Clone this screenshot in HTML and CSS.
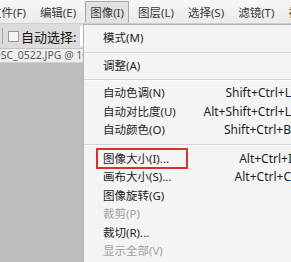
FILE: index.html
```html
<!DOCTYPE html>
<html lang="zh-CN">
<head>
    <meta charset="UTF-8">
    <title>图像菜单</title>
    <link rel="stylesheet" href="styles.css">
</head>
<body>

    <!-- Верхнее меню -->
    <div class="menubar">
        <span class="mb-item first">文件(F)</span>
        <span class="mb-item">编辑(E)</span>
        <span class="mb-item active">图像(I)</span>
        <span class="mb-item">图层(L)</span>
        <span class="mb-item">选择(S)</span>
        <span class="mb-item">滤镜(T)</span>
        <span class="mb-item">视图(V)</span>
    </div>

    <div class="workspace">
        <div class="options">
            <span class="grip"></span>
            <span class="check"></span>
            <span class="opt-label">自动选择:</span>
            <span class="opt-input">组</span>
        </div>
        <div class="doc-tab">DSC_0522.JPG @ 100%</div>
        <div class="canvas"></div>

        <!-- Выпадающее меню -->
        <div class="dropdown">
            <div class="item">模式(M)</div>
            <div class="sep"></div>
            <div class="item">调整(A)</div>
            <div class="sep"></div>
            <div class="item"><span>自动色调(N)</span><span class="key">Shift+Ctrl+L</span></div>
            <div class="item"><span>自动对比度(U)</span><span class="key">Alt+Shift+Ctrl+L</span></div>
            <div class="item"><span>自动颜色(O)</span><span class="key">Shift+Ctrl+B</span></div>
            <div class="sep"></div>
            <div class="item marked"><span>图像大小(I)...</span><span class="key">Alt+Ctrl+I</span></div>
            <div class="item"><span>画布大小(S)...</span><span class="key">Alt+Ctrl+C</span></div>
            <div class="item">图像旋转(G)</div>
            <div class="item disabled">裁剪(P)</div>
            <div class="item">裁切(R)...</div>
            <div class="item disabled">显示全部(V)</div>
        </div>
    </div>

</body>
</html>
```
FILE: styles.css
```css
body {
    margin: 0;
    width: 291px;
    height: 262px;
    overflow: hidden;
    font-family: "Noto Sans", "Noto Sans CJK SC", sans-serif;
    font-size: 11.5px;
    color: #1e1e1e;
    background: #bdbdbd;
}

.menubar {
    height: 23px;
    display: flex;
    align-items: center;
    background: linear-gradient(#f7f7f7, #ebebeb);
    border-bottom: 1px solid #d0d0d0;
    white-space: nowrap;
}

.mb-item {
    padding: 2px 4px;
    margin-right: 4px;
    border: 1px solid transparent;
    color: #3a3a3a;
}

.mb-item.first {
    margin-left: -15px;
}

.mb-item.active {
    background: #e2e2e2;
    border-color: #a8a8a8;
    border-bottom-color: #e2e2e2;
}

.workspace {
    position: relative;
    height: 238px;
    display: flex;
    flex-direction: column;
}

.options {
    height: 24px;
    display: flex;
    align-items: center;
    background: #dcdcdc;
    border-bottom: 1px solid #c4c4c4;
}

.grip {
    width: 1px;
    height: 16px;
    margin: 0 5px 0 2px;
    background: #a9a9a9;
}

.check {
    width: 9px;
    height: 9px;
    border: 1px solid #9a9a9a;
    background: #f4f4f4;
    margin-right: 2px;
}

.opt-label {
    font-size: 13px;
    color: #111;
}

.opt-input {
    margin-left: 4px;
    height: 20px;
    padding: 0 6px;
    background: #fff;
    font-size: 13px;
    line-height: 20px;
}

.doc-tab {
    height: 13px;
    margin-left: -7px;
    width: 120px;
    background: #eeeeee;
    border-bottom: 1px solid #cfcfcf;
    color: #5a5a5a;
    font-size: 10.5px;
    line-height: 13px;
    white-space: nowrap;
    overflow: hidden;
}

.canvas {
    flex: 1;
    background: #bdbdbd;
}

.dropdown {
    position: absolute;
    left: 83px;
    top: 0;
    width: 220px;
    padding: 4px 0 1px;
    background: #f4f4f4;
    border: 1px solid #b4b4b4;
    box-shadow: 1px 1px 2px rgba(0, 0, 0, 0.2);
}

.item {
    height: 18.6px;
    line-height: 18.6px;
    padding-left: 19px;
    padding-right: 13px;
    display: flex;
    justify-content: space-between;
    white-space: nowrap;
}

.item.marked {
    box-shadow: inset 0 0 0 2px #d8322c;
    height: 21px;
    line-height: 21px;
    margin: -1px 116px -1px 12px;
    padding-left: 7px;
    padding-right: 0;
    position: relative;
}

.item.marked .key {
    position: absolute;
    right: -104px;
}

.key {
    font-size: 12px;
    color: #1e1e1e;
}

.disabled {
    color: #a2a2a2;
}

.sep {
    height: 1px;
    margin: 4px 0 3px;
    background: #d4d4d4;
    border-bottom: 1px solid #fbfbfb;
}
```
